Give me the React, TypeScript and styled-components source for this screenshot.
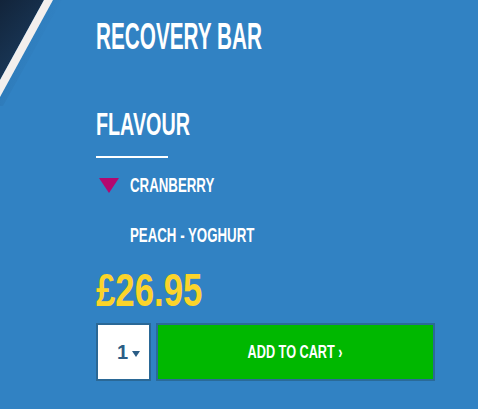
import React, { useState } from "react";
import styled, { createGlobalStyle } from "styled-components";

const GlobalStyle = createGlobalStyle`
  html, body {
    margin: 0;
    padding: 0;
  }
  body {
    background: #3182c3;
    font-family: "Liberation Sans", Arial, sans-serif;
  }
`;

const Page = styled.div`
  position: relative;
  width: 478px;
  height: 409px;
  overflow: hidden;
  background: #3182c3;
`;

const Corner = styled.svg`
  position: absolute;
  top: 0;
  left: 0;
`;

const Column = styled.div`
  display: flex;
  flex-direction: column;
  align-items: flex-start;
  padding: 19px 0 0 96px;
`;

// condensed display type: the sans face squeezed horizontally
const Squeeze = styled.span<{ $x: number; $origin?: string }>`
  display: inline-block;
  transform: scaleX(${(p) => p.$x});
  transform-origin: ${(p) => p.$origin || "left"} center;
  white-space: nowrap;
`;

const Title = styled.h1`
  margin: 0;
  font-size: 36px;
  line-height: 36px;
  font-weight: 700;
  color: #ffffff;
`;

const SectionTitle = styled.h2`
  margin: 53px 0 0;
  font-size: 32px;
  line-height: 32px;
  font-weight: 700;
  color: #ffffff;
`;

const Rule = styled.div`
  width: 72px;
  height: 2px;
  margin-top: 16px;
  background: #ffffff;
`;

const Options = styled.ul`
  list-style: none;
  margin: 16px 0 0;
  padding: 0;
  display: flex;
  flex-direction: column;
  gap: 29px;
`;

const Option = styled.li`
  display: flex;
  align-items: center;
  height: 21px;
  font-size: 21px;
  line-height: 21px;
  font-weight: 700;
  color: #ffffff;
  cursor: pointer;
`;

const Marker = styled.span<{ $active: boolean }>`
  flex: none;
  width: 0;
  height: 0;
  margin: 2px 11px 0 3px;
  border-left: 10px solid transparent;
  border-right: 10px solid transparent;
  border-top: 15px solid ${(p) => (p.$active ? "#b3086f" : "transparent")};
`;

const Price = styled.div`
  margin-top: 21px;
  font-size: 47px;
  line-height: 47px;
  font-weight: 700;
  color: #fbd42a;
`;

const Controls = styled.div`
  display: flex;
  gap: 5px;
  margin-top: 10px;
`;

const Qty = styled.div`
  box-sizing: border-box;
  width: 55px;
  height: 58px;
  display: flex;
  align-items: center;
  justify-content: flex-end;
  gap: 4px;
  padding-right: 9px;
  background: #ffffff;
  border: 2px solid #2a6896;
  font-size: 20px;
  font-weight: 700;
  color: #2b5d86;
`;

const Caret = styled.span`
  width: 0;
  height: 0;
  margin-top: 3px;
  border-left: 4px solid transparent;
  border-right: 4px solid transparent;
  border-top: 6px solid #2b5d86;
`;

const CartButton = styled.button`
  box-sizing: border-box;
  width: 279px;
  height: 58px;
  display: flex;
  align-items: center;
  justify-content: center;
  padding: 0;
  background: #00b800;
  border: 2px solid #2a6a98;
  font-family: "Liberation Sans", Arial, sans-serif;
  font-size: 19px;
  font-weight: 700;
  color: #ffffff;
  cursor: pointer;
`;

const flavours = ["CRANBERRY", "PEACH - YOGHURT"];

export default function App() {
  const [selected, setSelected] = useState(0);

  return (
    <Page>
      <GlobalStyle />
      <Corner width="70" height="120" viewBox="0 0 70 120">
        <defs>
          <linearGradient id="navy" x1="0" y1="0" x2="0.6" y2="1">
            <stop offset="0" stopColor="#12243a" />
            <stop offset="1" stopColor="#1b3c5f" />
          </linearGradient>
          <linearGradient id="shade" x1="0" y1="0" x2="1" y2="0.55">
            <stop offset="0" stopColor="#2868a0" stopOpacity="0.7" />
            <stop offset="1" stopColor="#3182c3" stopOpacity="0" />
          </linearGradient>
        </defs>
        <polygon points="53,0 62,0 3,106 0,106 0,97" fill="url(#shade)" />
        <polygon points="0,0 44,0 0,80" fill="url(#navy)" />
        <polygon points="44,0 53,0 0,97 0,80" fill="#f3efed" />
      </Corner>
      <Column>
        <Title>
          <Squeeze $x={0.576}>RECOVERY BAR</Squeeze>
        </Title>
        <SectionTitle>
          <Squeeze $x={0.617}>FLAVOUR</Squeeze>
        </SectionTitle>
        <Rule />
        <Options>
          {flavours.map((name, i) => (
            <Option key={name} onClick={() => setSelected(i)}>
              <Marker $active={i === selected} />
              <Squeeze $x={0.632}>{name}</Squeeze>
            </Option>
          ))}
        </Options>
        <Price>
          <Squeeze $x={0.74}>£26.95</Squeeze>
        </Price>
        <Controls>
          <Qty>
            1
            <Caret />
          </Qty>
          <CartButton>
            <Squeeze $x={0.668} $origin="center">
              ADD TO CART ›
            </Squeeze>
          </CartButton>
        </Controls>
      </Column>
    </Page>
  );
}
